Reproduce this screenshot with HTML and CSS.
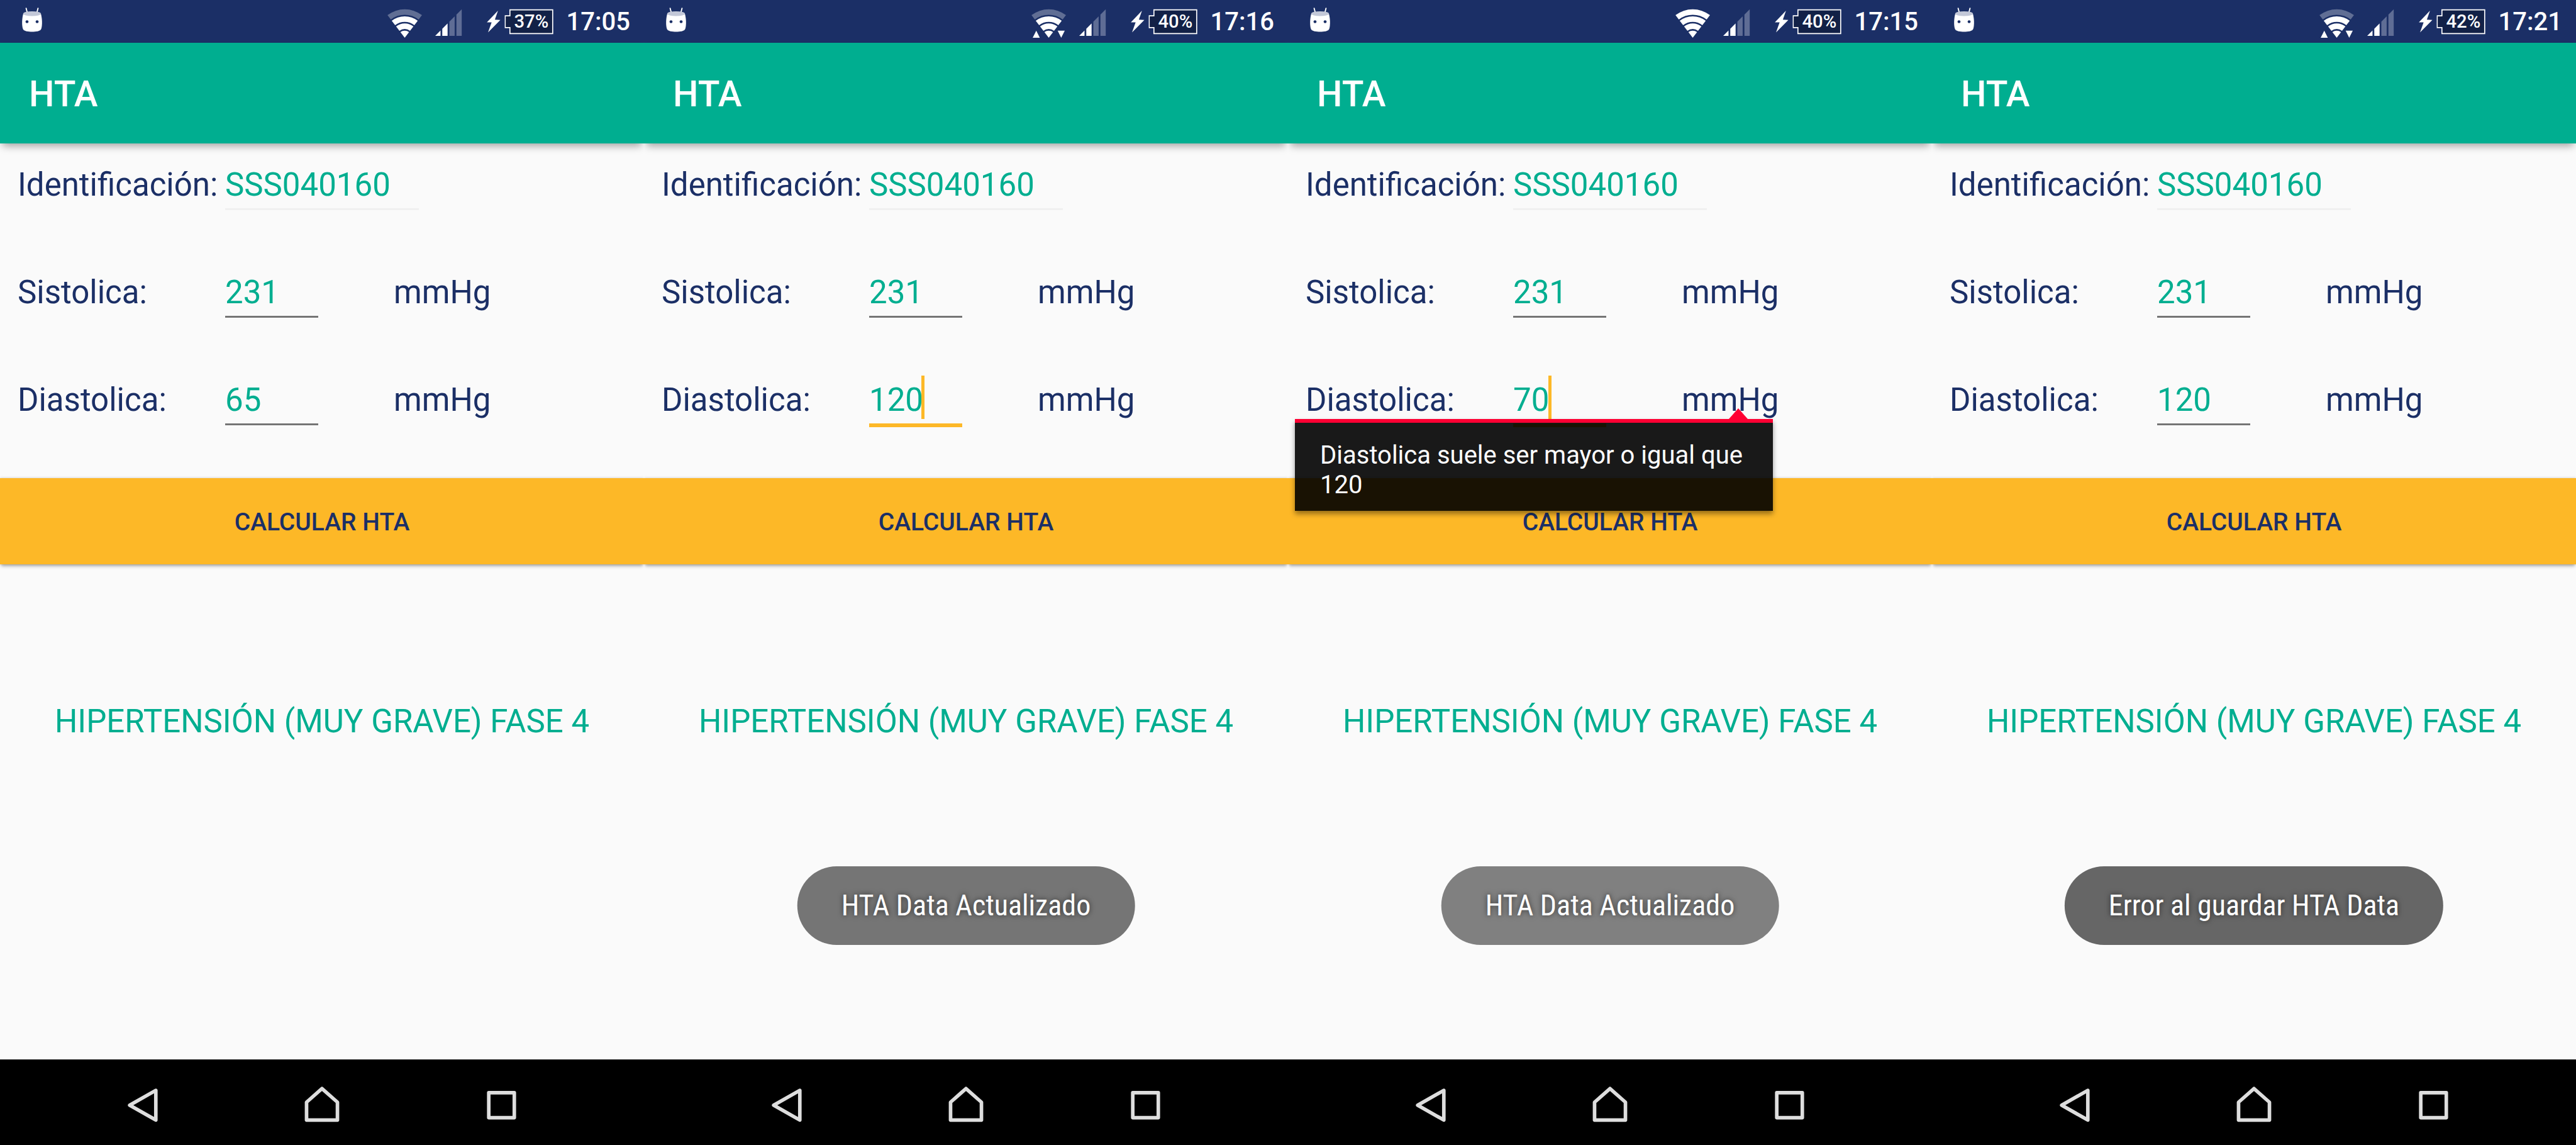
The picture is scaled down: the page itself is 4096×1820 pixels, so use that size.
FILE: index.html
```html
<!DOCTYPE html>
<html lang="es">
<head>
<meta charset="utf-8">
<meta name="viewport" content="width=device-width, initial-scale=1">
<title>HTA</title>
<link rel="stylesheet" href="styles.css">
</head>
<body>
<svg class="sprite" aria-hidden="true">
  <symbol id="robot" viewBox="0 0 36 54">
    <path d="M8 4.5 10.5 14M28 4.5 25.500 14" stroke="#fff" stroke-width="2" stroke-linecap="round"/>
    <path d="M3 14C1 22 .5 32 2.500 39 4 43.500 12 44 18 44s14-.5 15.500-5C35.500 32 35 22 33 14Z" fill="#fff"/>
    <ellipse cx="18" cy="13.500" rx="15" ry="4" fill="#c3c8d8"/>
    <circle cx="9.500" cy="27" r="2.500" fill="#1b2f66"/>
    <circle cx="26.500" cy="27" r="2.500" fill="#1b2f66"/>
  </symbol>
  <symbol id="wifi-inner" viewBox="0 0 60 54">
    <g transform="translate(29 54)" fill="#fff">
      <path d="M-21.900-28.600A36 36 0 0 1 21.900-28.600L16.200-21.200A26.700 26.700 0 0 0-16.200-21.200Z"/>
      <path d="M-14.600-19.100A24 24 0 0 1 14.600-19.100L8.900-11.700A14.700 14.700 0 0 0-8.900-11.700Z"/>
      <path d="M-7.300-9.500A12 12 0 0 1 7.300-9.500L0 0Z"/>
    </g>
  </symbol>
  <symbol id="wifi-outer" viewBox="0 0 60 54">
    <path transform="translate(29 54)" d="M-29-38A47.800 47.800 0 0 1 29-38L23.400-30.600A38.500 38.500 0 0 0-23.400-30.600Z" fill="#fff"/>
  </symbol>
  <symbol id="wifi-arrows" viewBox="0 0 60 54">
    <path d="M2 54h12L8 42ZM44 42h12l-6 12Z" fill="#fff"/>
  </symbol>
  <symbol id="signal" viewBox="0 0 48 54">
    <path d="M0 51 9 42v9ZM12 51V39l9-9v21Z" fill="#fff"/>
    <path d="M24 51V27l9-9v33ZM36 51V15l9-9v45Z" fill="#5f6d95"/>
  </symbol>
  <symbol id="bolt" viewBox="0 0 25 54">
    <path d="M19.700 8.500 14.500 23.500 23.700 24 3 45 9 28H1Z" fill="#fff"/>
  </symbol>
  <symbol id="battery" viewBox="0 0 83 54">
    <path d="M9 7H81V47H9V37H1V17H9Z" fill="#122147" stroke="#fff" stroke-width="1.800"/>
  </symbol>
  <symbol id="back" viewBox="0 0 72 72">
    <path d="M58 16V66L14 41Z" fill="none" stroke="#dedede" stroke-width="6" stroke-linejoin="round"/>
  </symbol>
  <symbol id="home" viewBox="0 0 72 72">
    <path d="M10 66V36L36 13 62 36V66Z" fill="none" stroke="#dedede" stroke-width="6" stroke-linejoin="round"/>
  </symbol>
  <symbol id="recent" viewBox="0 0 72 72">
    <path d="M15 20H58V62H15Z" fill="none" stroke="#dedede" stroke-width="6" stroke-linejoin="round"/>
  </symbol>
</svg>

<div class="screens">

  <section class="screen">
    <div class="status">
      <svg class="robot"><use href="#robot"/></svg>
      <svg class="wifi"><use href="#wifi-outer" opacity=".3"/><use href="#wifi-inner"/></svg>
      <svg class="signal"><use href="#signal"/></svg>
      <svg class="bolt"><use href="#bolt"/></svg>
      <svg class="battery" viewBox="0 0 83 54"><use href="#battery"/><text x="45" y="37" class="percent">37%</text></svg>
      <time class="clock">17:05</time>
    </div>
    <header class="appbar"><h1>HTA</h1></header>
    <main class="content">
      <form class="form">
        <div class="row">
          <label for="id1">Identificación:</label>
          <div class="field wide"><input id="id1" type="text" value="SSS040160" readonly></div>
        </div>
        <div class="row">
          <label for="sis1">Sistolica:</label>
          <div class="field"><input id="sis1" type="text" inputmode="numeric" value="231"></div>
          <span>mmHg</span>
        </div>
        <div class="row">
          <label for="dia1">Diastolica:</label>
          <div class="field"><input id="dia1" type="text" inputmode="numeric" value="65"></div>
          <span>mmHg</span>
        </div>
      </form>
      <button class="calc" type="button">CALCULAR HTA</button>
      <p class="result">HIPERTENSIÓN (MUY GRAVE) FASE 4</p>
    </main>
    <nav class="nav">
      <button type="button" aria-label="Atrás"><svg><use href="#back"/></svg></button>
      <button type="button" aria-label="Inicio"><svg><use href="#home"/></svg></button>
      <button type="button" aria-label="Recientes"><svg><use href="#recent"/></svg></button>
    </nav>
  </section>

  <section class="screen">
    <div class="status">
      <svg class="robot"><use href="#robot"/></svg>
      <svg class="wifi"><use href="#wifi-outer" opacity=".3"/><use href="#wifi-inner"/><use href="#wifi-arrows"/></svg>
      <svg class="signal"><use href="#signal"/></svg>
      <svg class="bolt"><use href="#bolt"/></svg>
      <svg class="battery" viewBox="0 0 83 54"><use href="#battery"/><text x="45" y="37" class="percent">40%</text></svg>
      <time class="clock">17:16</time>
    </div>
    <header class="appbar"><h1>HTA</h1></header>
    <main class="content">
      <form class="form">
        <div class="row">
          <label for="id2">Identificación:</label>
          <div class="field wide"><input id="id2" type="text" value="SSS040160" readonly></div>
        </div>
        <div class="row">
          <label for="sis2">Sistolica:</label>
          <div class="field"><input id="sis2" type="text" inputmode="numeric" value="231"></div>
          <span>mmHg</span>
        </div>
        <div class="row">
          <label for="dia2">Diastolica:</label>
          <div class="field active"><input id="dia2" type="text" inputmode="numeric" value="120"><i class="caret" style="left:3ch"></i></div>
          <span>mmHg</span>
        </div>
      </form>
      <button class="calc" type="button">CALCULAR HTA</button>
      <p class="result">HIPERTENSIÓN (MUY GRAVE) FASE 4</p>
      <div class="toast" role="status">HTA Data Actualizado</div>
    </main>
    <nav class="nav">
      <button type="button" aria-label="Atrás"><svg><use href="#back"/></svg></button>
      <button type="button" aria-label="Inicio"><svg><use href="#home"/></svg></button>
      <button type="button" aria-label="Recientes"><svg><use href="#recent"/></svg></button>
    </nav>
  </section>

  <section class="screen">
    <div class="status">
      <svg class="robot"><use href="#robot"/></svg>
      <svg class="wifi"><use href="#wifi-outer"/><use href="#wifi-inner"/></svg>
      <svg class="signal"><use href="#signal"/></svg>
      <svg class="bolt"><use href="#bolt"/></svg>
      <svg class="battery" viewBox="0 0 83 54"><use href="#battery"/><text x="45" y="37" class="percent">40%</text></svg>
      <time class="clock">17:15</time>
    </div>
    <header class="appbar"><h1>HTA</h1></header>
    <main class="content">
      <form class="form">
        <div class="row">
          <label for="id3">Identificación:</label>
          <div class="field wide"><input id="id3" type="text" value="SSS040160" readonly></div>
        </div>
        <div class="row">
          <label for="sis3">Sistolica:</label>
          <div class="field"><input id="sis3" type="text" inputmode="numeric" value="231"></div>
          <span>mmHg</span>
        </div>
        <div class="row">
          <label for="dia3">Diastolica:</label>
          <div class="field active"><input id="dia3" type="text" inputmode="numeric" value="70" aria-describedby="err3"><i class="caret" style="left:2ch"></i></div>
          <span>mmHg</span>
          <div class="error" id="err3" role="alert">Diastolica suele ser mayor o igual que 120</div>
        </div>
      </form>
      <button class="calc" type="button">CALCULAR HTA</button>
      <p class="result">HIPERTENSIÓN (MUY GRAVE) FASE 4</p>
      <div class="toast light" role="status">HTA Data Actualizado</div>
    </main>
    <nav class="nav">
      <button type="button" aria-label="Atrás"><svg><use href="#back"/></svg></button>
      <button type="button" aria-label="Inicio"><svg><use href="#home"/></svg></button>
      <button type="button" aria-label="Recientes"><svg><use href="#recent"/></svg></button>
    </nav>
  </section>

  <section class="screen">
    <div class="status">
      <svg class="robot"><use href="#robot"/></svg>
      <svg class="wifi"><use href="#wifi-outer" opacity=".3"/><use href="#wifi-inner"/><use href="#wifi-arrows"/></svg>
      <svg class="signal"><use href="#signal"/></svg>
      <svg class="bolt"><use href="#bolt"/></svg>
      <svg class="battery" viewBox="0 0 83 54"><use href="#battery"/><text x="45" y="37" class="percent">42%</text></svg>
      <time class="clock">17:21</time>
    </div>
    <header class="appbar"><h1>HTA</h1></header>
    <main class="content">
      <form class="form">
        <div class="row">
          <label for="id4">Identificación:</label>
          <div class="field wide"><input id="id4" type="text" value="SSS040160" readonly></div>
        </div>
        <div class="row">
          <label for="sis4">Sistolica:</label>
          <div class="field"><input id="sis4" type="text" inputmode="numeric" value="231"></div>
          <span>mmHg</span>
        </div>
        <div class="row">
          <label for="dia4">Diastolica:</label>
          <div class="field"><input id="dia4" type="text" inputmode="numeric" value="120"></div>
          <span>mmHg</span>
        </div>
      </form>
      <button class="calc" type="button">CALCULAR HTA</button>
      <p class="result">HIPERTENSIÓN (MUY GRAVE) FASE 4</p>
      <div class="toast dark" role="status">Error al guardar HTA Data</div>
    </main>
    <nav class="nav">
      <button type="button" aria-label="Atrás"><svg><use href="#back"/></svg></button>
      <button type="button" aria-label="Inicio"><svg><use href="#home"/></svg></button>
      <button type="button" aria-label="Recientes"><svg><use href="#recent"/></svg></button>
    </nav>
  </section>

</div>
</body>
</html>
```

FILE: styles.css
```css
:root {
  --navy: #1b2f66;
  --green: #00ae90;
  --amber: #fdb827;
  --paper: #fafafa;
}

* { box-sizing: border-box; margin: 0; }

body {
  font-family: Roboto, "Liberation Sans", sans-serif;
  background: var(--paper);
}

button, input { font: inherit; border: 0; border-radius: 0; padding: 0; background: none; }

.sprite { position: absolute; width: 0; height: 0; }

.screens {
  display: grid;
  grid-template-columns: repeat(4, minmax(0, 1fr));
  min-height: 100vh;
}

.screen { display: flex; flex-direction: column; overflow: hidden; }

/* Status bar */
.status {
  display: flex;
  align-items: center;
  height: 68px;
  padding: 0 22px 0 34px;
  background: var(--navy);
  color: #fff;
}
.status svg { display: block; flex: none; height: 51px; }
.status .robot { width: 34px; margin-right: auto; }
.status .wifi { width: 57px; margin-right: 19px; }
.status .signal { width: 45px; margin-right: 36px; }
.status .bolt { width: 24px; margin-right: 5px; }
.status .battery { width: 79px; margin-right: 20px; }
.percent { font-size: 31px; font-weight: 500; fill: #fff; text-anchor: middle; }
.clock { padding-top: 2px; font-size: 40px; line-height: 48px; font-weight: 500; }

/* App bar */
.appbar {
  position: relative;
  display: flex;
  align-items: center;
  height: 160px;
  padding: 4px 46px 0;
  background: var(--green);
  color: #fff;
  box-shadow: 0 8px 12px -4px rgba(0, 0, 0, .36);
}
.appbar h1 { font-size: 57px; line-height: 68px; font-weight: 500; }

/* Form */
.content {
  position: relative;
  flex: 1;
  display: flex;
  flex-direction: column;
}
.form {
  display: flex;
  flex-direction: column;
  gap: 71px;
  padding: 15px 28px 75px;
  color: var(--navy);
  font-size: 51px;
}
.row {
  position: relative;
  display: grid;
  grid-template-columns: 330px 268px 1fr;
  height: 100px;
  line-height: 102px;
}
.field { position: relative; width: 148px; height: 91px; }
.field input {
  display: block;
  width: 100%;
  height: 91px;
  padding-top: 14px;
  border-bottom: 3px solid #757575;
  color: var(--green);
  outline: none;
}
.field.wide { width: 308px; }
.field.wide input { border-bottom-color: #f0f0f0; }
.field.active input { height: 94px; border-bottom: 6px solid var(--amber); }
.caret {
  position: absolute;
  top: 12px;
  width: 5px;
  height: 69px;
  background: var(--amber);
}

/* Validation bubble under the faulty field */
.error {
  position: absolute;
  z-index: 1;
  top: 81px;
  left: -17px;
  width: 760px;
  padding: 28px 38px 18px 40px;
  border-top: 6px solid #ff0033;
  background: rgba(0, 0, 0, .9);
  background-clip: padding-box;
  color: #fff;
  font-size: 40px;
  line-height: 47px;
  box-shadow: 0 5px 8px rgba(0, 0, 0, .4);
}
.error::before {
  content: "";
  position: absolute;
  right: 40px;
  bottom: 100%;
  margin-bottom: 6px;
  border: 15px solid transparent;
  border-top: 0;
  border-bottom: 17px solid #ff0033;
}

.calc {
  height: 137px;
  padding-top: 3px;
  background: var(--amber);
  color: var(--navy);
  font-size: 39px;
  font-weight: 500;
  box-shadow: 0 5px 5px -2px rgba(0, 0, 0, .28), 0 0 4px rgba(0, 0, 0, .2);
}

.result {
  padding-top: 220px;
  text-align: center;
  color: var(--green);
  font-size: 51px;
  line-height: 60px;
}

/* Toast */
.toast {
  position: absolute;
  bottom: 182px;
  left: 50%;
  transform: translateX(-50%);
  padding: 0 70px;
  border-radius: 63px;
  background: #757575;
  color: #fff;
  font-family: "Roboto Condensed", Roboto, "Liberation Sans", sans-serif;
  font-size: 46px;
  line-height: 125px;
  white-space: nowrap;
  text-shadow: 0 0 8px rgba(0, 0, 0, .6);
}
.toast.light { background: #808080; }
.toast.dark { background: #666; }

/* Navigation bar */
.nav {
  display: grid;
  grid-template-columns: repeat(3, 1fr);
  height: 136px;
  padding: 0 85px;
  background: #000;
}
.nav button { display: flex; align-items: center; justify-content: center; }
.nav svg { width: 68px; height: 68px; }
```
